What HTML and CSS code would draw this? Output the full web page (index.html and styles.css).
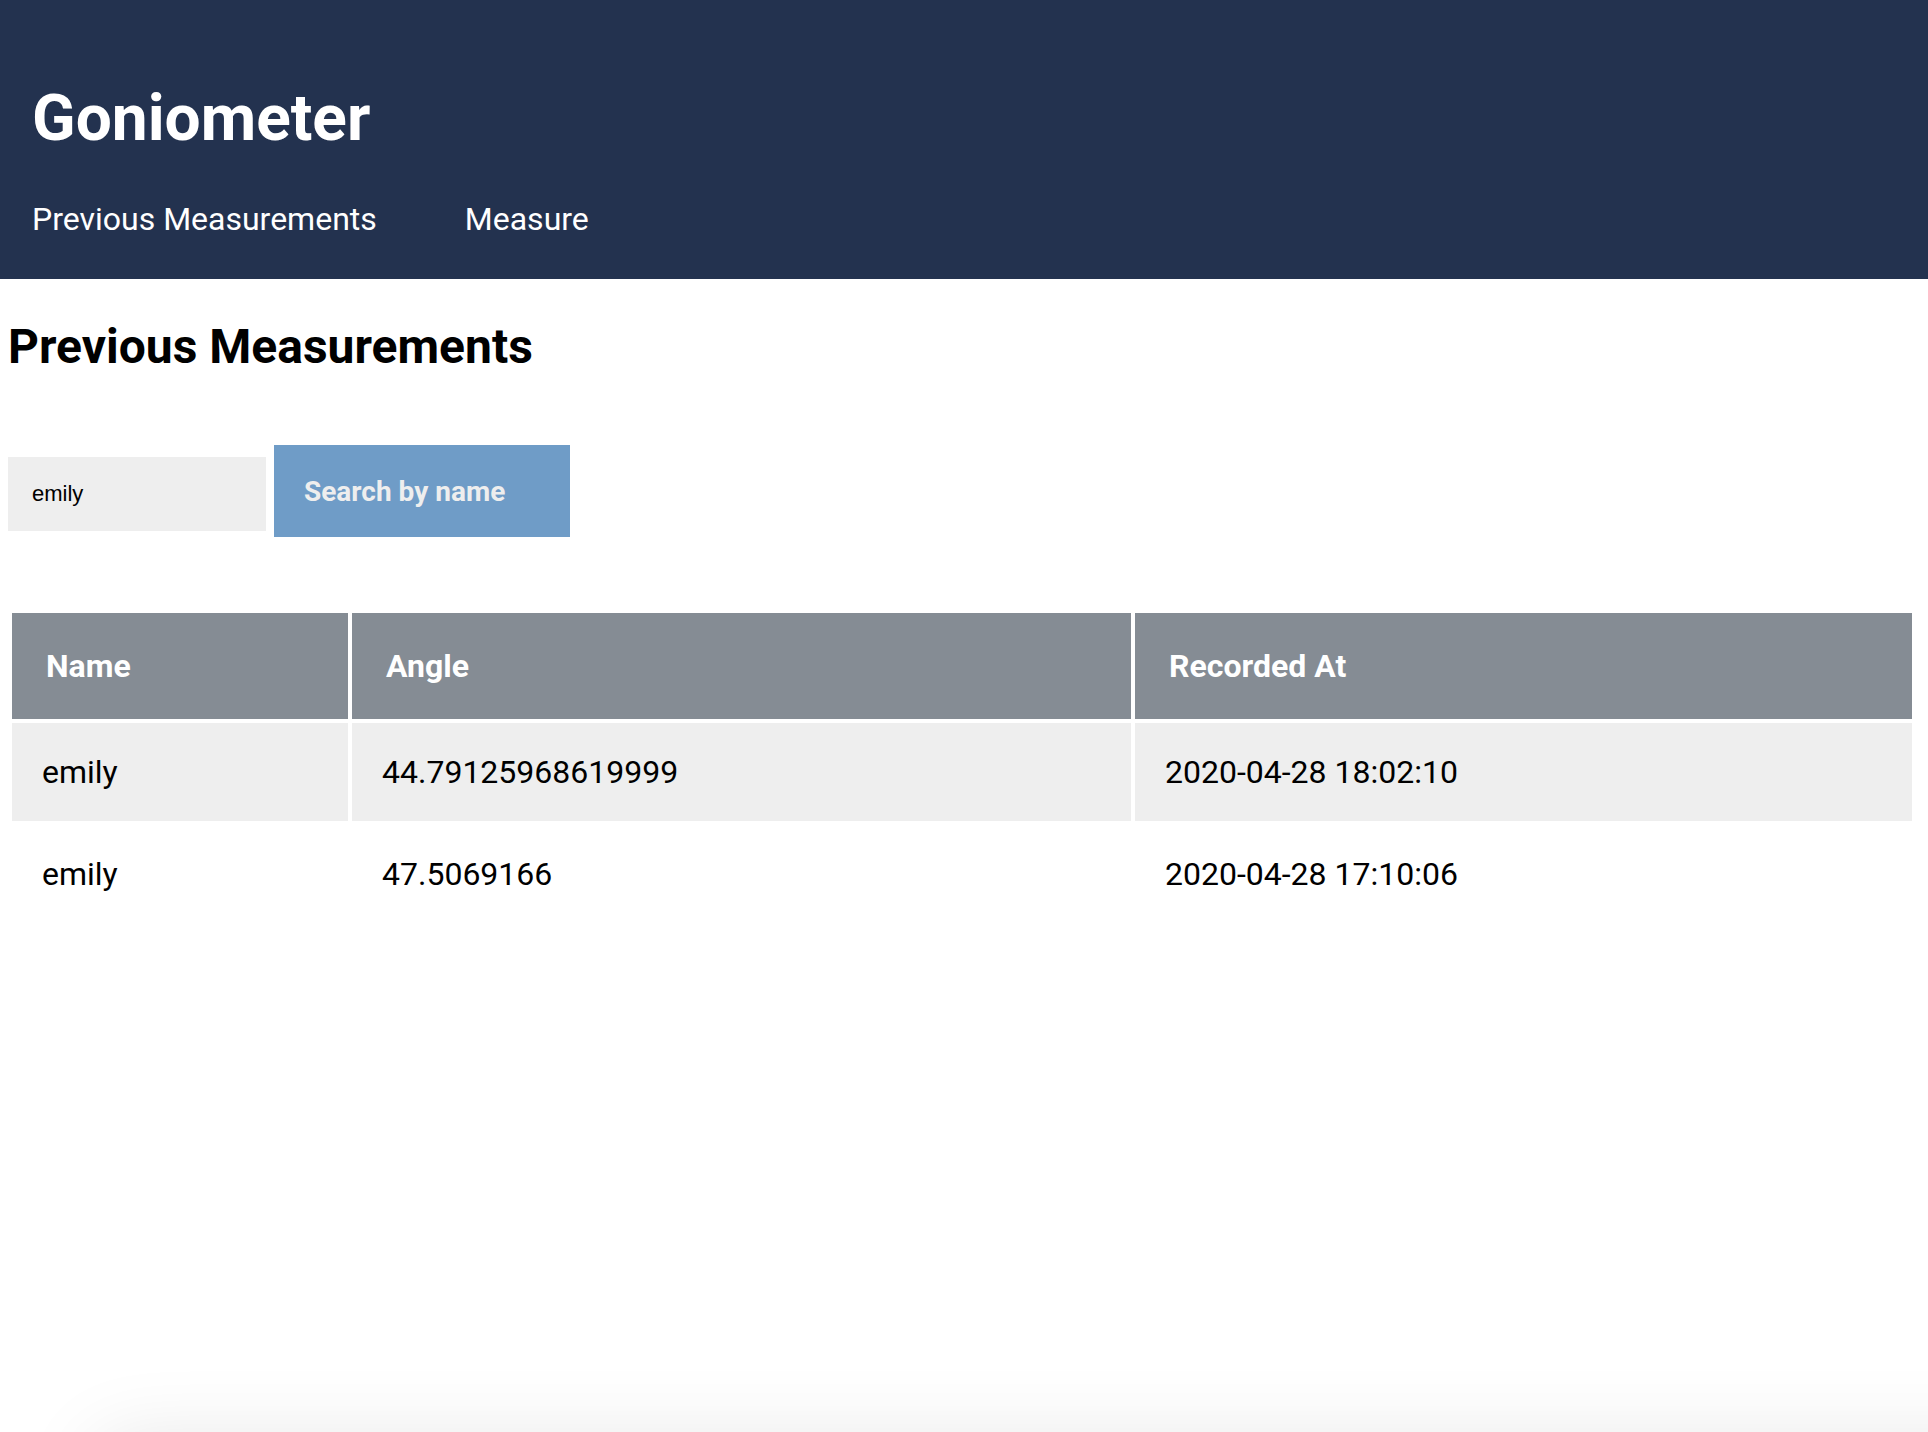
FILE: index.html
```html
<!DOCTYPE html>
<html lang="en">
<head>
<meta charset="utf-8">
<title>Goniometer</title>
<link rel="stylesheet" href="styles.css">
</head>
<body>
<header class="site-header">
  <h1 class="site-title">Goniometer</h1>
  <nav class="site-nav">
    <a class="nav-link" href="#">Previous Measurements</a>
    <a class="nav-link" href="#">Measure</a>
  </nav>
</header>
<main class="content">
  <h2 class="page-title">Previous Measurements</h2>
  <form class="search-form">
    <input class="search-input" type="text" value="emily">
    <button class="search-button" type="button">Search by name</button>
  </form>
  <table class="results">
    <colgroup>
      <col class="col-name">
      <col class="col-angle">
      <col class="col-time">
    </colgroup>
    <thead>
      <tr><th>Name</th><th>Angle</th><th>Recorded At</th></tr>
    </thead>
    <tbody>
      <tr class="row-alt"><td>emily</td><td>44.79125968619999</td><td>2020-04-28 18:02:10</td></tr>
      <tr><td>emily</td><td>47.5069166</td><td>2020-04-28 17:10:06</td></tr>
    </tbody>
  </table>
</main>
<div class="window-shadow"></div>
</body>
</html>
```

FILE: styles.css
```css
html, body {
  margin: 0;
  padding: 0;
  background: #ffffff;
}

body {
  font-family: Roboto, "Liberation Sans", sans-serif;
  font-size: 16px;
  color: #000000;
  overflow: hidden;
}

.site-header {
  background: #23324f;
  color: #ffffff;
  padding: 81px 32px 41px;
}

.site-title {
  margin: 0 0 44px;
  font-size: 64px;
  font-weight: 700;
  line-height: normal;
}

.site-nav {
  display: flex;
  gap: 88px;
  line-height: normal;
}

.nav-link {
  color: #ffffff;
  text-decoration: none;
  font-size: 32px;
  font-weight: 400;
}

.content {
  padding: 0 8px;
}

.page-title {
  font-size: 48px;
  font-weight: 700;
  line-height: normal;
  margin: 39px 0 70px;
}

.search-form {
  display: flex;
  align-items: baseline;
  gap: 8px;
  margin: 0 0 72px;
}

.search-input {
  box-sizing: border-box;
  width: 258px;
  height: 74px;
  padding: 0 24px;
  border: 0;
  outline: none;
  background: #eeeeee;
  font-family: "Liberation Sans", Arial, sans-serif;
  font-size: 22px;
  color: #000000;
}

.search-button {
  box-sizing: border-box;
  width: 296px;
  height: 92px;
  padding: 0 0 0 30px;
  border: 0;
  background: #6f9cc7;
  color: #eeeeee;
  font-family: Roboto, "Liberation Sans", sans-serif;
  font-size: 28px;
  font-weight: 700;
  text-align: left;
  line-height: normal;
}

.results {
  table-layout: fixed;
  width: calc(100% - 4px);
  border-spacing: 4px;
  border-collapse: separate;
}

.col-name { width: 336px; }
.col-angle { width: 779px; }

.results th {
  background: #858c94;
  color: #ffffff;
  font-size: 32px;
  font-weight: 700;
  text-align: left;
  line-height: normal;
  padding: 34px 34px;
}

.results td {
  font-size: 32px;
  font-weight: 400;
  line-height: normal;
  padding: 30px 30px;
}

.row-alt td {
  background: #eeeeee;
}

.window-shadow {
  position: fixed;
  left: 100px;
  right: -120px;
  top: calc(100vh + 14px);
  height: 400px;
  border-radius: 24px;
  box-shadow: 0 0 80px 6px rgba(0, 0, 0, 0.10);
  pointer-events: none;
}
```
